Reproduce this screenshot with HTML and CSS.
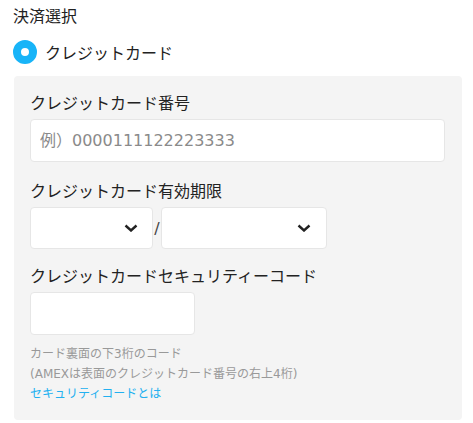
FILE: index.html
```html
<!DOCTYPE html>
<html lang="ja">
<head>
    <meta charset="UTF-8">
    <meta name="viewport" content="width=device-width, initial-scale=1.0">
    <title>決済選択</title>
    <link rel="stylesheet" href="styles.css">
</head>
<body>
    <div class="page">
        <h2 class="title">決済選択</h2>
        <label class="radio-row">
            <span class="radio"></span>
            <span>クレジットカード</span>
        </label>

        <div class="panel">
            <div class="field">
                <div class="label">クレジットカード番号</div>
                <input type="text" class="text-input full" placeholder="例）0000111122223333">
            </div>

            <div class="field expiry">
                <div class="label">クレジットカード有効期限</div>
                <div class="expiry-row">
                    <div class="select month">
                        <svg width="14" height="8" viewBox="0 0 14 8"><path d="M1.5 1.5 L7 6.5 L12.5 1.5" fill="none" stroke="#222" stroke-width="2.4"/></svg>
                    </div>
                    <span class="slash">/</span>
                    <div class="select year">
                        <svg width="14" height="8" viewBox="0 0 14 8"><path d="M1.5 1.5 L7 6.5 L12.5 1.5" fill="none" stroke="#222" stroke-width="2.4"/></svg>
                    </div>
                </div>
            </div>

            <div class="field security">
                <div class="label">クレジットカードセキュリティーコード</div>
                <input type="text" class="text-input short">
            </div>

            <div class="help">
                <p>カード裏面の下3桁のコード</p>
                <p>(AMEXは表面のクレジットカード番号の右上4桁)</p>
                <a href="#">セキュリティコードとは</a>
            </div>
        </div>
    </div>
</body>
</html>
```

FILE: styles.css
```css
body {
    margin: 0;
    padding: 0;
    background-color: #fff;
    font-family: "DejaVu Sans", "Noto Sans CJK JP", sans-serif;
    color: #333;
}
.page {
    padding: 5px 11px 0 13px;
}
.title {
    margin: 0;
    font-size: 16px;
    font-weight: normal;
    line-height: 24px;
    color: #222;
}
.radio-row {
    display: flex;
    align-items: center;
    gap: 8px;
    margin-top: 11px;
    height: 24px;
    font-size: 16px;
    color: #222;
}
.radio {
    box-sizing: border-box;
    width: 24px;
    height: 24px;
    border-radius: 50%;
    border: 8px solid #18b4f8;
    background-color: #fff;
}
.panel {
    margin: 12px 0 0 1px;
    padding: 16px 17px 16px 16px;
    background-color: #f4f4f4;
    border-radius: 4px;
}
.label {
    font-size: 16px;
    line-height: 24px;
    margin-bottom: 3px;
    color: #222;
}
.expiry {
    margin-top: 18px;
}
.security {
    margin-top: 16px;
}
.text-input {
    box-sizing: border-box;
    display: block;
    height: 43px;
    padding: 0 9px;
    border: 1px solid #e6e6e6;
    border-radius: 4px;
    background-color: #fff;
    font-family: inherit;
    font-size: 16px;
    color: #333;
}
.text-input::placeholder {
    color: #8a8a8a;
}
.full {
    width: 100%;
}
.short {
    width: 165px;
}
.expiry-row {
    display: flex;
    align-items: center;
}
.select {
    box-sizing: border-box;
    height: 42px;
    display: flex;
    align-items: center;
    justify-content: flex-end;
    padding-right: 14px;
    border: 1px solid #e6e6e6;
    border-radius: 4px;
    background-color: #fff;
}
.month {
    width: 123px;
}
.year {
    width: 166px;
    padding-right: 15px;
}
.slash {
    width: 8px;
    text-align: center;
    font-size: 16px;
    color: #444;
}
.help {
    margin-top: 9px;
    font-size: 12px;
    line-height: 20px;
    color: #999;
}
.help p {
    margin: 0;
}
.help a {
    color: #22b0f0;
    text-decoration: none;
}
```
